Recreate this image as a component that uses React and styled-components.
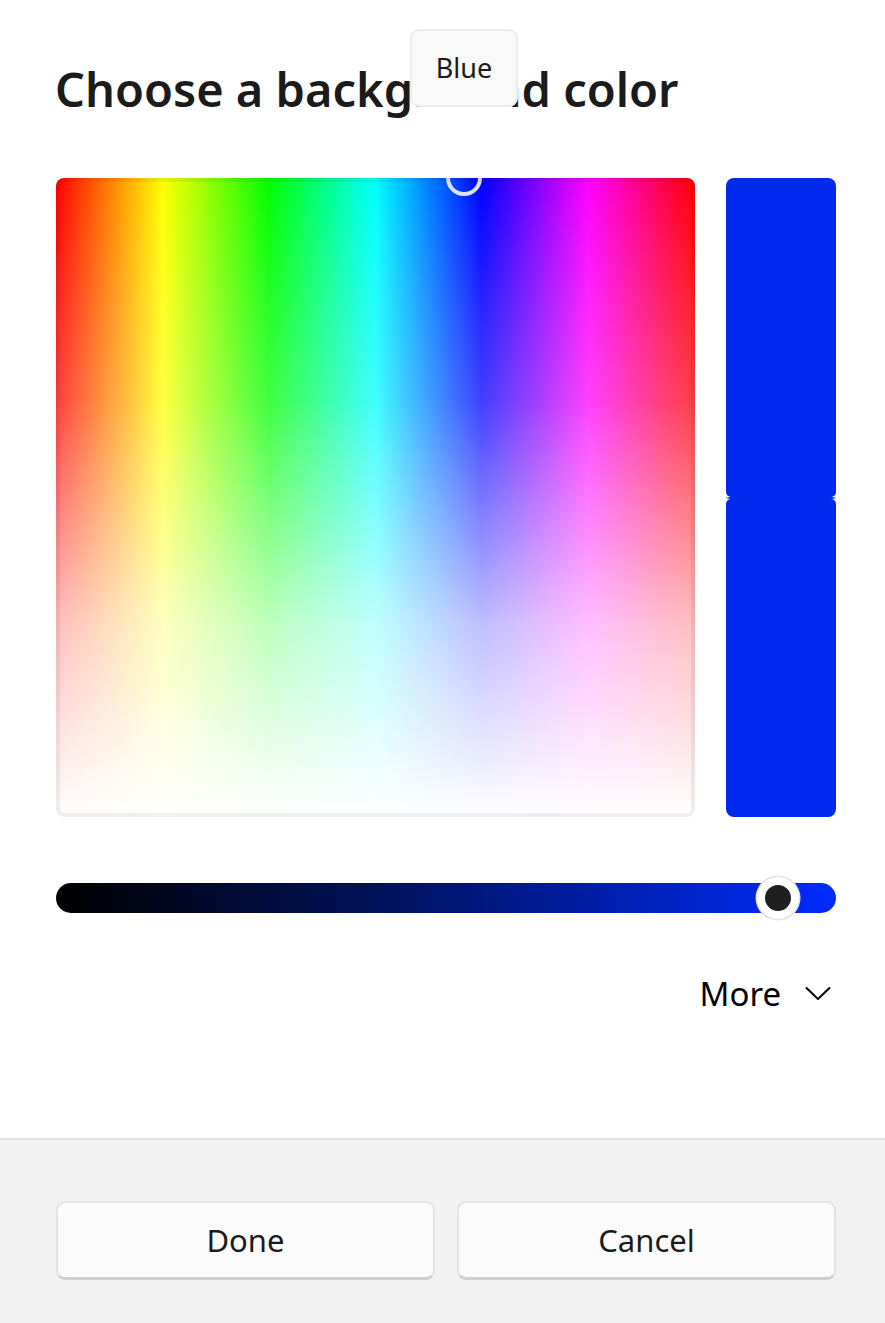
import React from 'react';
import styled, { createGlobalStyle } from 'styled-components';

const GlobalStyle = createGlobalStyle`
  html, body {
    margin: 0;
    padding: 0;
    background: #ffffff;
  }
  body {
    font-family: "Noto Sans", "Open Sans", sans-serif;
    color: #1b1b1b;
  }
`

const Dialog = styled.div`
  width: 885px;
  height: 1323px;
  display: flex;
  flex-direction: column;
  background: #ffffff;
`

const Body = styled.div`
  position: relative;
  flex: 1;
  padding: 56px 49px 0 55px;
`

const Title = styled.h1`
  margin: 0;
  font-size: 47px;
  font-weight: 600;
  line-height: 66px;
  letter-spacing: 0;
  color: #1b1b1b;
`

const Tooltip = styled.div`
  position: absolute;
  top: 29px;
  left: 410px;
  width: 108px;
  height: 78px;
  box-sizing: border-box;
  background: #f9f9f9;
  border: 2px solid #ececec;
  border-radius: 9px;
  display: flex;
  justify-content: center;
  padding-top: 21px;
  font-size: 27px;
  line-height: 1.2;
  color: #1b1b1b;
`

const PickerRow = styled.div`
  margin-top: 56px;
  margin-left: 1px;
  display: grid;
  grid-template-columns: 639px 110px;
  column-gap: 31px;
  height: 639px;
`

const Spectrum = styled.div`
  position: relative;
  overflow: hidden;
  border-radius: 8px;
  background:
    linear-gradient(to bottom, rgba(255,255,255,0) 0%, rgba(255,255,255,0.25) 35%, rgba(255,255,255,0.75) 70%, #ffffff 100%),
    linear-gradient(to right, #ff0000 0%, #ffff00 16.67%, #00ff00 33.33%, #00ffff 50%, #0000ff 66.67%, #ff00ff 83.33%, #ff0000 100%);

  &:after {
    content: '';
    position: absolute;
    inset: 0;
    border: 4px solid rgba(0, 0, 0, 0.06);
    border-radius: 8px;
    pointer-events: none;
  }
`

const Selector = styled.div`
  position: absolute;
  width: 36px;
  height: 36px;
  box-sizing: border-box;
  border: 4px solid #dde1f6;
  border-radius: 50%;
  transform: translate(-50%, -50%);
`

const SwatchColumn = styled.div`
  display: flex;
  flex-direction: column;
  height: 100%;
`

const Swatch = styled.div`
  flex: 1;
  background: ${p => p.color};
  border-radius: ${p => (p.top ? '8px 8px 5px 5px' : '5px 5px 8px 8px')};
`

const Notch = styled.div`
  height: 2px;
  background: linear-gradient(to right, #e8e8e8 0, ${p => p.color} 4px, ${p => p.color} calc(100% - 4px), #e8e8e8 100%);
`

const Slider = styled.div`
  position: relative;
  margin-top: 66px;
  margin-left: 1px;
  height: 30px;
  border-radius: 15px;
  background: linear-gradient(to right, #000000 0%, #001463 45%, #002bff 100%);
`

const Thumb = styled.div`
  position: absolute;
  top: 50%;
  width: 42px;
  height: 42px;
  box-sizing: border-box;
  border-radius: 50%;
  background: #1f1f1f;
  border: 8px solid #ffffff;
  box-shadow: 0 0 0 1.5px #e2e2e2;
  transform: translate(-50%, -50%);
`

const MoreRow = styled.div`
  display: flex;
  justify-content: flex-end;
  align-items: center;
  gap: 22px;
  margin-top: 58px;
  padding-right: 5px;
  font-size: 33px;
  color: #000000;
`

const MoreLabel = styled.span`
  margin-right: 2px;
`

const Footer = styled.div`
  height: 185px;
  box-sizing: border-box;
  border-top: 2px solid #e3e3e3;
  background: #f3f3f3;
  padding: 61px 49px 0 56px;
  display: grid;
  grid-template-columns: 1fr 1fr;
  column-gap: 22px;
  align-items: start;
`

const Button = styled.button`
  height: 79px;
  box-sizing: border-box;
  background: #fbfbfb;
  border: 2px solid #e4e4e4;
  border-bottom: 3px solid #cfcfcf;
  border-radius: 9px;
  font-family: "Noto Sans", "Open Sans", sans-serif;
  font-size: 31px;
  color: #1b1b1b;
  padding: 0;
`

export default function App() {
  const selected = '#0029ee';
  const hue = { x: 408, y: 0 };
  const brightness = 92.5;
  return (
    <Dialog>
      <GlobalStyle />
      <Body>
        <Title>Choose a background color</Title>
        <Tooltip>Blue</Tooltip>
        <PickerRow>
          <Spectrum>
            <Selector style={{ left: hue.x, top: hue.y }} />
          </Spectrum>
          <SwatchColumn>
            <Swatch top color={selected} />
            <Notch color={selected} />
            <Swatch color={selected} />
          </SwatchColumn>
        </PickerRow>
        <Slider>
          <Thumb style={{ left: `${brightness}%` }} />
        </Slider>
        <MoreRow>
          <MoreLabel>More</MoreLabel>
          <svg width="26" height="16" viewBox="0 0 26 16">
            <path d="M1.5 2 L13 13 L24.5 2" fill="none" stroke="#000" strokeWidth="2" strokeLinecap="round" strokeLinejoin="round" />
          </svg>
        </MoreRow>
      </Body>
      <Footer>
        <Button>Done</Button>
        <Button>Cancel</Button>
      </Footer>
    </Dialog>
  );
}
